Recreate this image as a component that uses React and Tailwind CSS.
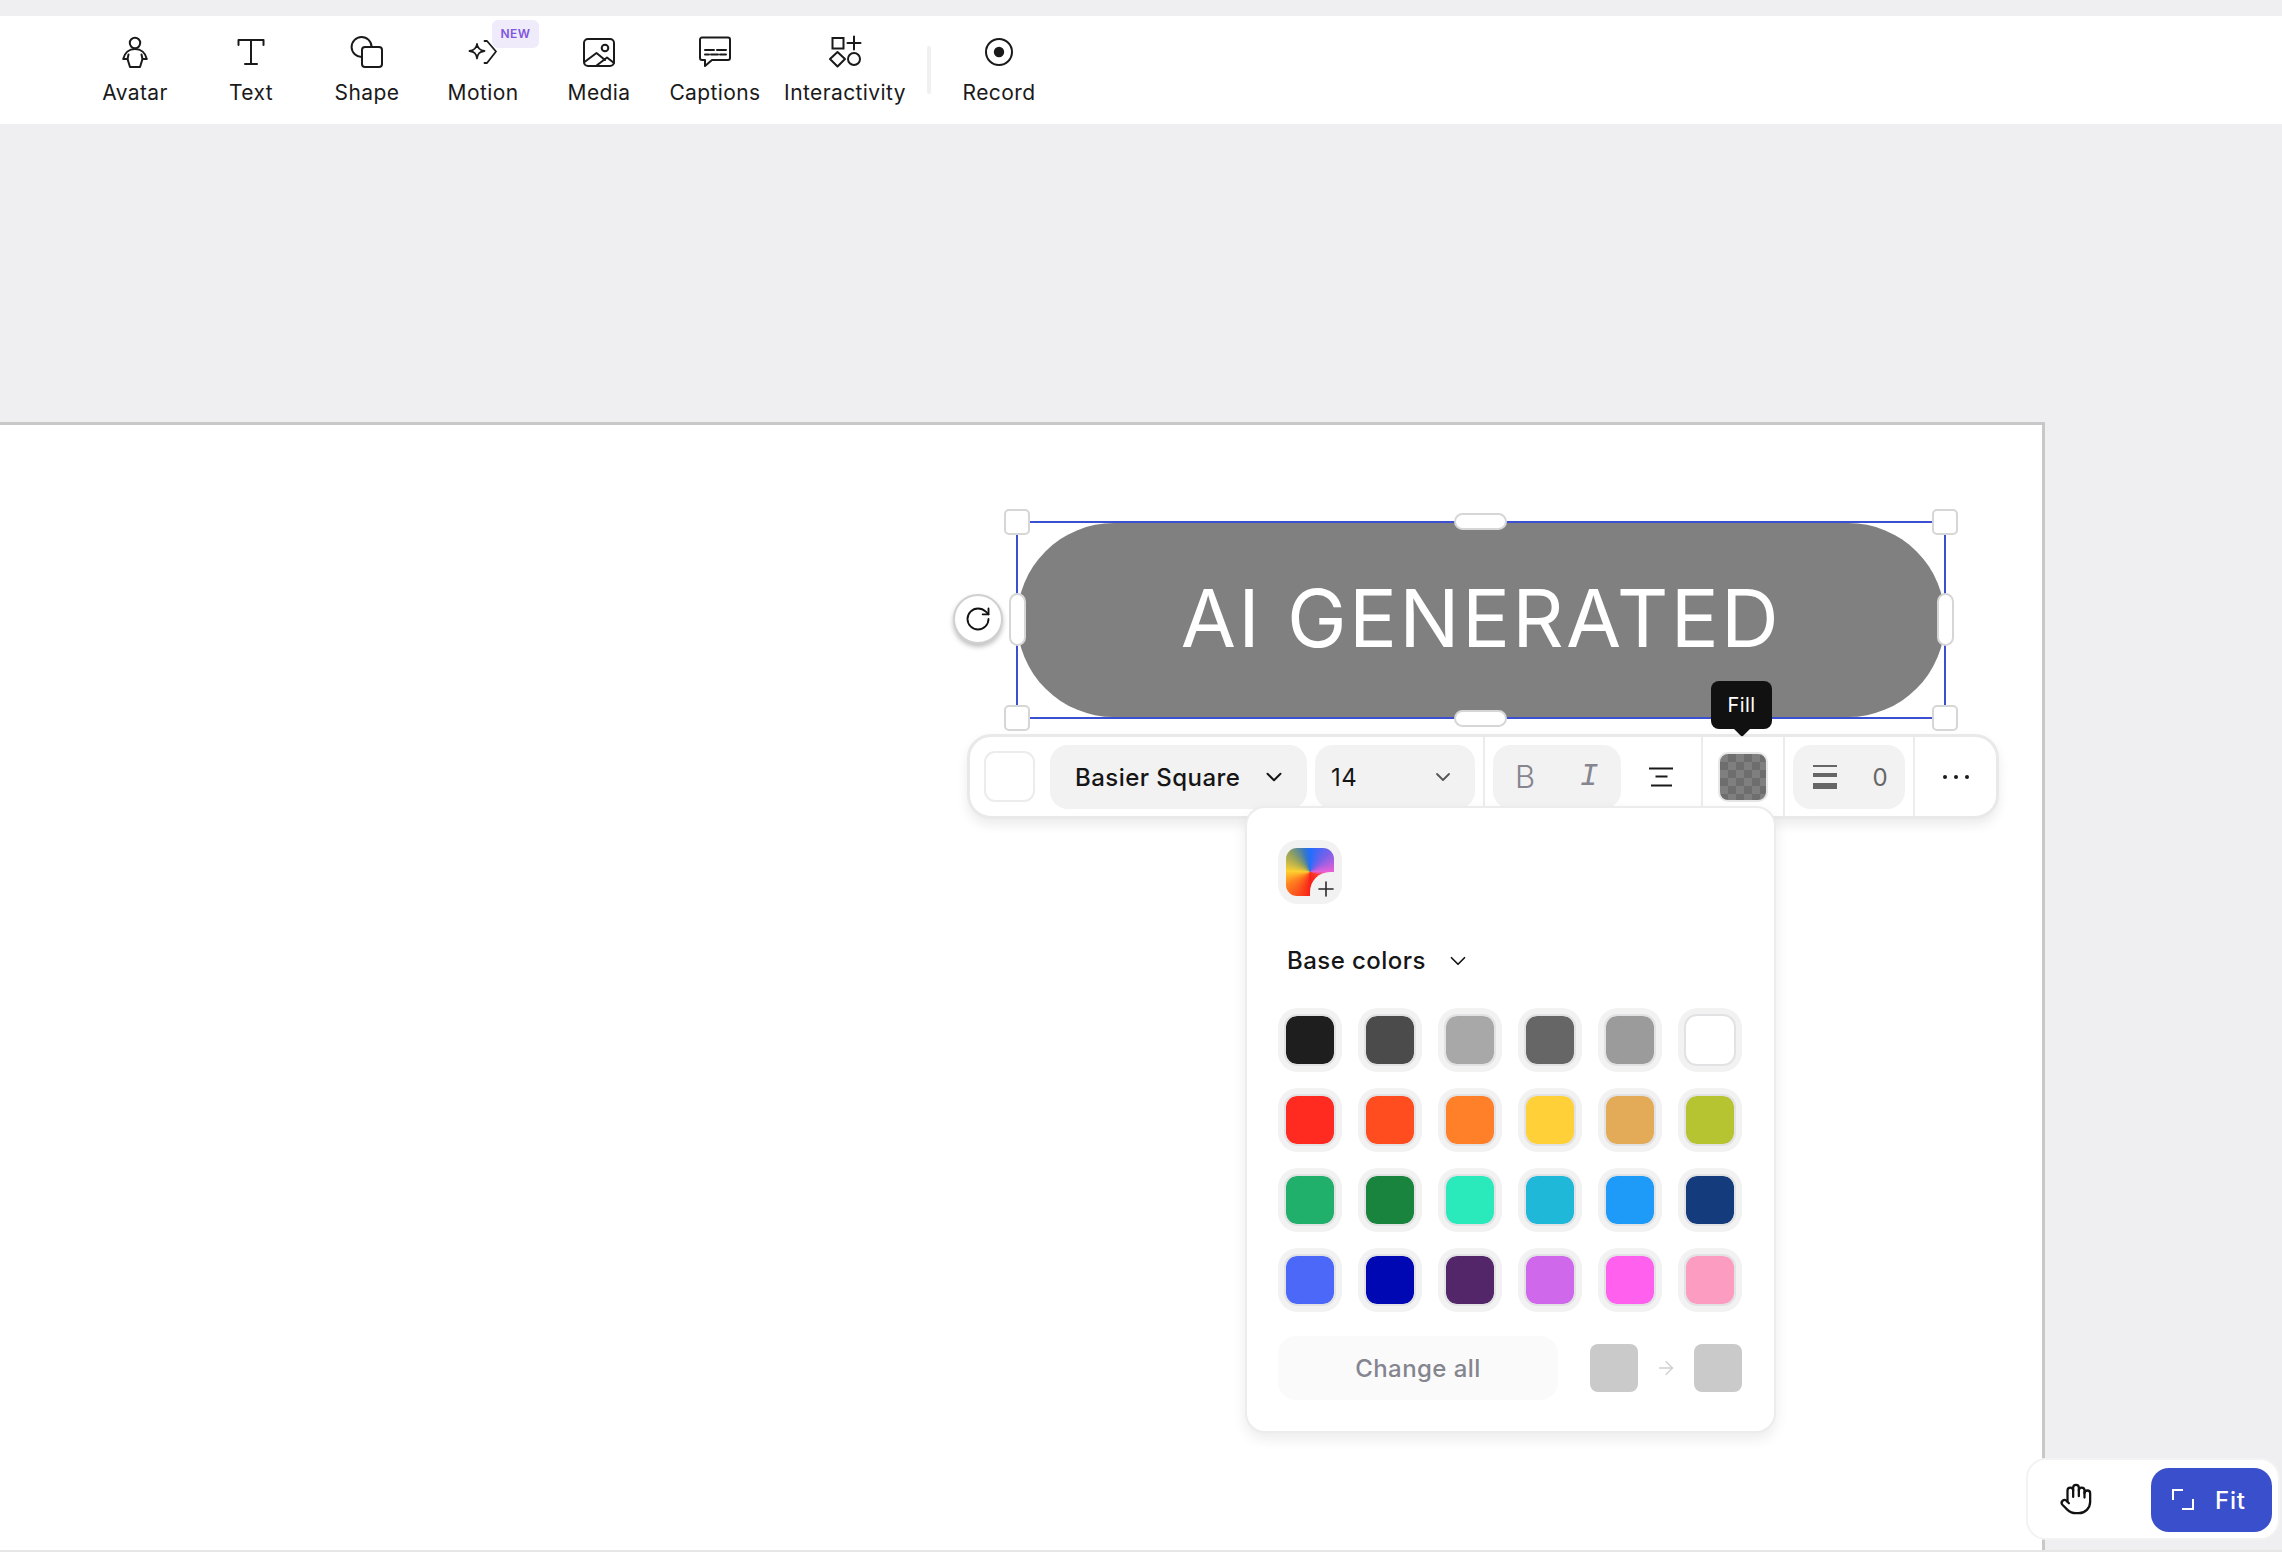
import React from 'react';
import { Hand, RotateCw, ChevronDown, ArrowRight, Plus } from 'lucide-react';

const Ico = ({ children, sw = 2 }) => (
  <svg width="36" height="36" viewBox="0 0 36 36" fill="none" stroke="#1a1a1a" strokeWidth={sw} strokeLinecap="round" strokeLinejoin="round">
    {children}
  </svg>
);

const AvatarIcon = () => (
  <Ico>
    <circle cx="18" cy="9" r="5.2" />
    <path d="M18 15C12 15 7.5 19 6.2 25H10.5L13 33H23L25.5 25H29.8C28.5 19 24 15 18 15Z" />
    <path d="M11.5 20.5L10.5 25M24.5 20.5L25.5 25" />
  </Ico>
);
const TextIcon = () => (
  <Ico>
    <path d="M5.5 11V6H30.5V11M18 6V30M12 30H24" />
  </Ico>
);
const ShapeIcon = () => (
  <Ico>
    <path d="M13 23A10 10 0 1 1 22.6 13" />
    <rect x="13" y="13" width="20" height="20" rx="3" />
  </Ico>
);
const MotionIcon = () => (
  <Ico sw={1.8}>
    <path d="M12 10C12.6 14.5 14.5 16.4 19.5 17C14.5 17.6 12.6 19.5 12 24.5C11.4 19.5 9.5 17.6 4.5 17C9.5 16.4 11.4 14.5 12 10Z" />
    <path d="M19.5 7H22L31 17.5L22 29H19.5" />
  </Ico>
);
const MediaIcon = () => (
  <Ico>
    <rect x="3" y="5" width="30" height="27" rx="4" />
    <circle cx="24" cy="14" r="3.3" />
    <path d="M3.5 28L15.5 19L24 26M15 32L26 23.5L33 29" />
  </Ico>
);
const CaptionsIcon = () => (
  <Ico>
    <path d="M5 3.5H31A2 2 0 0 1 33 5.5V24A2 2 0 0 1 31 26H15L8 32V26H5A2 2 0 0 1 3 24V5.5A2 2 0 0 1 5 3.5Z" />
    <path d="M8 16H17M20 16H29M8 20.5H12M14 20.5H21M23 20.5H29" />
  </Ico>
);
const InteractIcon = () => (
  <Ico>
    <rect x="5.5" y="4" width="11" height="10.5" strokeLinejoin="miter" />
    <path d="M20.5 9H33.5M27 2.5V15.5" />
    <path d="M10.5 18L18 25L10.5 32.5L3 25Z" />
    <circle cx="27" cy="25" r="6" />
  </Ico>
);
const RecordIcon = () => (
  <Ico>
    <circle cx="18" cy="18" r="13" />
    <circle cx="18" cy="18" r="5.2" fill="#1a1a1a" stroke="none" />
  </Ico>
);

const tools = [
  { label: 'Avatar', icon: AvatarIcon, width: 'w-[116px]' },
  { label: 'Text', icon: TextIcon, width: 'w-[116px]' },
  { label: 'Shape', icon: ShapeIcon, width: 'w-[116px]' },
  { label: 'Motion', icon: MotionIcon, width: 'w-[116px]', isNew: true },
  { label: 'Media', icon: MediaIcon, width: 'w-[116px]' },
  { label: 'Captions', icon: CaptionsIcon, width: 'w-[116px]' },
  { label: 'Interactivity', icon: InteractIcon, width: 'w-[144px]' },
];

const ToolItem = ({ label, icon: Icon, width, isNew }) => (
  <div className={`relative flex flex-col items-center pt-[18px] ${width}`}>
    <Icon />
    <span className="mt-[9px] text-[21px] leading-[28px] tracking-[0.4px] text-[#1a1a1a] whitespace-nowrap">{label}</span>
    {isNew && (
      <span className="absolute left-[67px] top-[4px] flex h-[28px] w-[47px] items-center justify-center rounded-[6px] bg-[#f0ebfb] text-[12px] font-semibold tracking-[0.5px] text-[#7f56e0]">
        NEW
      </span>
    )}
  </div>
);

const TopBar = () => (
  <div className="flex h-[108px] shrink-0 items-start bg-white pl-[77px]">
    {tools.map((t) => <ToolItem key={t.label} {...t} />)}
    <div className="ml-[10px] mt-[30px] h-[48px] w-[4px] rounded-full bg-[#f0f0f1]" />
    <div className="ml-[10px]">
      <ToolItem label="Record" icon={RecordIcon} width="w-[116px]" />
    </div>
  </div>
);

const handleCls = 'absolute rounded-[5px] border-[2px] border-[#d6d6d6] bg-white';
const pillCls = 'absolute rounded-full border-[2px] border-[#d6d6d6] bg-white';

const Selection = () => (
  <div className="absolute left-[1016px] top-[96px] h-[198px] w-[930px] border-[2px] border-[#3b50d0]">
    <div className="-mx-[1px] flex h-full items-center justify-center rounded-full bg-[#808080] pb-[4px]">
      <span className="text-[80px] font-normal leading-none tracking-[2.3px] text-white whitespace-nowrap">AI GENERATED</span>
    </div>
    <div className={`${handleCls} -left-[14px] -top-[14px] h-[26px] w-[26px]`} />
    <div className={`${handleCls} -right-[14px] -top-[14px] h-[26px] w-[26px]`} />
    <div className={`${handleCls} -left-[14px] -bottom-[14px] h-[26px] w-[26px]`} />
    <div className={`${handleCls} -right-[14px] -bottom-[14px] h-[26px] w-[26px]`} />
    <div className={`${pillCls} left-[436px] -top-[10px] h-[17px] w-[53px]`} />
    <div className={`${pillCls} left-[436px] -bottom-[10px] h-[17px] w-[53px]`} />
    <div className={`${pillCls} -left-[9px] top-[70px] h-[53px] w-[17px]`} />
    <div className={`${pillCls} -right-[10px] top-[70px] h-[53px] w-[17px]`} />
    <div className="absolute -left-[65px] top-[71px] flex h-[50px] w-[50px] items-center justify-center rounded-full border-[2px] border-[#d0d0d0] bg-white shadow-[0_3px_5px_rgba(0,0,0,0.25)]">
      <RotateCw size={28} strokeWidth={1.6} color="#111" />
    </div>
  </div>
);

const Divider = ({ className }) => <div className={`h-full w-[2px] shrink-0 bg-[#ececec] ${className}`} />;

const AlignIcon = () => (
  <svg width="26" height="22" viewBox="0 0 26 22" stroke="#1a1a1a" strokeWidth="2" className="ml-[27px] shrink-0">
    <path d="M1 2.5H25M7.5 10.5H19.5M3 19.5H24" />
  </svg>
);

const StrokeIcon = () => (
  <svg width="24" height="24" viewBox="0 0 24 24" fill="#666">
    <rect x="0" y="0" width="24" height="2" />
    <rect x="0" y="8" width="24" height="4" />
    <rect x="0" y="18" width="24" height="6" />
  </svg>
);

const FloatingBar = () => (
  <div className="absolute left-[967px] top-[309px] flex h-[85px] w-[1032px] items-center rounded-[24px] border-[3px] border-[#e9e9e9] bg-white pl-[14px] text-[24px] tracking-[0.45px] text-[#161616] shadow-[0_6px_12px_rgba(0,0,0,0.08)]">
    <div className="h-[51px] w-[51px] shrink-0 rounded-[11px] border-[2px] border-[#ececec] bg-white" />
    <div className="ml-[15px] flex h-[64px] w-[257px] shrink-0 items-center rounded-[18px] bg-[#f2f2f2] pl-[25px] font-medium">
      <span className="whitespace-nowrap pt-[2px]">Basier Square</span>
      <ChevronDown size={26} strokeWidth={1.8} className="ml-[21px] shrink-0" />
    </div>
    <div className="ml-[8px] flex h-[64px] w-[160px] shrink-0 items-center justify-between rounded-[18px] bg-[#f2f2f2] pl-[16px] pr-[20px]">
      <span className="pt-[2px]">14</span>
      <ChevronDown size={24} strokeWidth={1.8} color="#555" />
    </div>
    <Divider className="ml-[8px]" />
    <div className="ml-[8px] flex h-[64px] w-[128px] shrink-0 items-center justify-around rounded-[18px] bg-[#f2f2f2] text-[#85858f]">
      <span className="text-[31px] font-light leading-none">B</span>
      <span className="text-[31px] italic leading-none [font-family:'Liberation_Mono',monospace]">I</span>
    </div>
    <AlignIcon />
    <Divider className="ml-[27px]" />
    <div className="ml-[15px] h-[50px] w-[50px] shrink-0 rounded-[10px] border-[2px] border-[#e6e6e6] bg-[repeating-conic-gradient(#6e6e6e_0_25%,#7f7f7f_0_50%)] bg-[length:16px_16px]" />
    <Divider className="ml-[15px]" />
    <div className="ml-[8px] flex h-[64px] w-[112px] shrink-0 items-center justify-between rounded-[18px] bg-[#f2f2f2] pl-[20px] pr-[17px] text-[#666]">
      <StrokeIcon />
      <span className="pt-[2px]">0</span>
    </div>
    <Divider className="ml-[8px]" />
    <div className="flex flex-1 items-center justify-center gap-[7px]">
      <div className="h-[4px] w-[4px] rounded-full bg-[#1a1a1a]" />
      <div className="h-[4px] w-[4px] rounded-full bg-[#1a1a1a]" />
      <div className="h-[4px] w-[4px] rounded-full bg-[#1a1a1a]" />
    </div>
  </div>
);

const Tooltip = () => (
  <div className="absolute left-[1711px] top-[256px] flex h-[48px] w-[61px] items-center justify-center rounded-[8px] bg-[#111] text-[20px] tracking-[0.4px] text-white">
    Fill
    <div className="absolute -bottom-[5px] left-[24px] h-[14px] w-[14px] rotate-45 rounded-[2px] bg-[#111]" />
  </div>
);

const colors = [
  '#1e1e1e', '#4b4b4b', '#a8a8a8', '#666666', '#9b9b9b', '#ffffff',
  '#ff2a20', '#ff4d20', '#ff8028', '#ffd038', '#e3aa58', '#b7c432',
  '#20b06c', '#18843e', '#2aeabc', '#20b8d8', '#1e9bf8', '#143c7c',
  '#4c68f8', '#0008b4', '#522668', '#d068ec', '#ff60ee', '#fc9cc0',
];

const Swatch = ({ color }) => (
  <div className="flex h-[64px] w-[64px] items-center justify-center rounded-[20px] bg-[#f2f2f2]">
    <div className="h-[48px] w-[48px] rounded-[11px] outline-[2px] outline-[#e2e2e4]" style={{ backgroundColor: color }} />
  </div>
);

const FillPopover = () => (
  <div className="absolute left-[1245px] top-[381px] h-[627px] w-[531px] rounded-[20px] border-[2px] border-[#ececec] bg-white pl-[31px] pt-[32px] tracking-[0.45px] shadow-[0_6px_14px_rgba(0,0,0,0.08)]">
    <div className="relative flex h-[64px] w-[64px] items-center justify-center overflow-hidden rounded-[20px] bg-[#f2f2f2]">
      <div className="h-[48px] w-[48px] rounded-[11px] bg-[conic-gradient(from_0deg_at_50%_50%,#1e6eff_0deg,#7a60e8_45deg,#e860d8_88deg,#f83a30_110deg,#f82018_180deg,#ff8020_240deg,#ffd030_272deg,#8fa060_315deg,#3a78c0_345deg,#1e6eff_360deg)]" />
      <div className="absolute bottom-0 right-0 flex h-[32px] w-[32px] items-center justify-center rounded-tl-[20px] bg-[#f2f2f2]">
        <Plus size={24} strokeWidth={1.6} color="#2a2a2a" className="translate-y-[1px]" />
      </div>
    </div>
    <div className="mt-[40px] flex h-[34px] items-center pl-[9px] text-[24px] font-medium text-[#161616]">
      <span>Base colors</span>
      <ChevronDown size={26} strokeWidth={1.6} className="ml-[19px]" />
    </div>
    <div className="mt-[30px] grid w-[464px] grid-cols-6 gap-[16px]">
      {colors.map((c) => <Swatch key={c} color={c} />)}
    </div>
    <div className="mt-[24px] flex w-[464px] items-center">
      <div className="flex h-[64px] w-[280px] items-center justify-center rounded-[18px] bg-[#fafafa] pt-[2px] text-[24px] font-medium text-[#85858f]">
        Change all
      </div>
      <div className="ml-[32px] h-[48px] w-[48px] rounded-[8px] bg-[#cacaca]" />
      <ArrowRight size={22} strokeWidth={1.5} color="#d0d0d0" className="ml-[17px]" />
      <div className="ml-[17px] h-[48px] w-[48px] rounded-[8px] bg-[#cacaca]" />
    </div>
  </div>
);

const FitControls = () => (
  <div className="absolute bottom-[14px] right-[2px] flex h-[82px] w-[254px] items-center rounded-[20px] border-[2px] border-[#f3f3f4] bg-white pl-[31px]">
    <Hand size={34} strokeWidth={1.6} color="#111" />
    <div className="ml-[58px] mt-[2px] flex h-[64px] w-[121px] items-center rounded-[18px] bg-[#3a4fcc] pl-[20px] text-[24px] font-medium tracking-[0.8px] text-white">
      <svg width="24" height="24" viewBox="0 0 24 24" fill="none" stroke="#fff" strokeWidth="2">
        <path d="M2 12V2H12M11 21H22V11" />
      </svg>
      <span className="ml-[20px] pt-[1px]">Fit</span>
    </div>
  </div>
);

const App = () => (
  <div className="relative flex h-screen w-full flex-col overflow-hidden bg-[#efeff1] [font-family:Inter,sans-serif]">
    <div className="h-[16px] shrink-0" />
    <TopBar />

    {/* artboard */}
    <div className="relative mt-[298px] w-[2045px] flex-1 border-r-[3px] border-t-[3px] border-[#c8c8c8] bg-white">
      <Selection />
      <FloatingBar />
      <Tooltip />
      <FillPopover />
    </div>

    <div className="h-[4px] shrink-0 border-t-[2px] border-[#e6e6e6] bg-white" />
    <FitControls />
  </div>
);

export default App;
